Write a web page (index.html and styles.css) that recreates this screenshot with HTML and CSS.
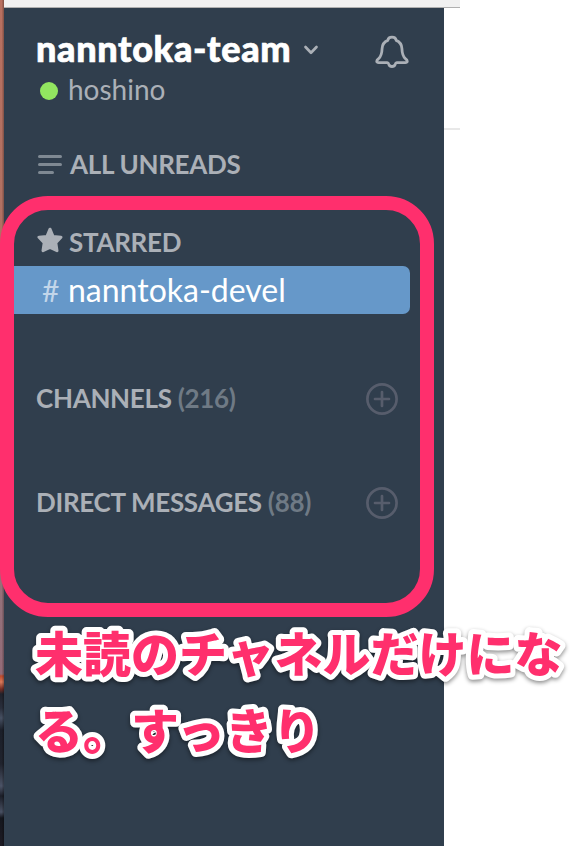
FILE: index.html
```html
<!DOCTYPE html>
<html lang="ja">
<head>
<meta charset="utf-8">
<title>nanntoka-team</title>
<link rel="stylesheet" href="styles.css">
</head>
<body>
<div class="screen">
  <div class="desktop"></div>
  <div class="window">
    <div class="titlebar"></div>
    <div class="panes">
      <aside class="sidebar">
        <header class="team">
          <div class="team-row">
            <span class="team-name">nanntoka-team</span>
            <svg class="chevron" width="16" height="12" viewBox="0 0 16 12"><path d="M2.5 3 L8 8.7 L13.5 3"/></svg>
            <svg class="bell" width="34" height="34" viewBox="0 0 34 34"><path d="M17 2.2 C14.7 2.2 13.1 3.5 12.8 5.4 C9.1 6.9 7.3 9.7 7.1 13.5 C6.9 18.4 6 21.6 3.6 23.6 C1.2 25.4 1 27.6 3.7 27.6 H12.3 C13.3 27.6 13.5 28.2 13.8 29.2 C14.3 30.7 15.4 31.5 17 31.5 C18.6 31.5 19.7 30.7 20.2 29.2 C20.5 28.2 20.7 27.6 21.7 27.6 H30.3 C33 27.6 32.8 25.4 30.4 23.6 C28 21.6 27.1 18.4 26.9 13.5 C26.7 9.7 24.9 6.9 21.2 5.4 C20.9 3.5 19.3 2.2 17 2.2 Z"/></svg>
          </div>
          <div class="user"><i class="presence"></i><span class="user-name">hoshino</span></div>
        </header>
        <div class="heading unreads">
          <svg class="lines" width="26" height="22" viewBox="0 0 26 22"><path d="M2.5 3.5H23.5 M2.5 11.5H23.5 M2.5 19.5H15.5"/></svg>
          <span class="unreads-label">ALL UNREADS</span>
        </div>
        <div class="heading starred">
          <svg class="star" width="26" height="26" viewBox="0 0 26 26"><path d="M13 2.2 L16 9.4 L24 10.2 L18.8 15.6 L20 23.7 L13 20.4 L6 23.7 L7.2 15.6 L2 10.2 L10 9.4 Z"/></svg>
          <span class="starred-label">STARRED</span>
        </div>
        <div class="channel"><span class="hash">#</span><span class="channel-name">nanntoka-devel</span></div>
        <div class="heading channels">
          <span class="channels-label">CHANNELS</span><span class="count">(216)</span>
          <svg class="plus" width="34" height="34" viewBox="0 0 34 34"><circle cx="17" cy="17" r="14.6"/><path d="M17 10V24 M10 17H24"/></svg>
        </div>
        <div class="heading directs">
          <span class="directs-label">DIRECT MESSAGES</span><span class="count">(88)</span>
          <svg class="plus" width="34" height="34" viewBox="0 0 34 34"><circle cx="17" cy="17" r="14.6"/><path d="M17 10V24 M10 17H24"/></svg>
        </div>
      </aside>
      <main class="content"><div class="content-header"></div></main>
    </div>
  </div>
  <div class="marker"></div>
  <svg class="note" width="584" height="170" viewBox="0 0 584 170">
    <text x="35" y="56">未読のチャネルだけにな</text>
    <text x="35" y="133">る。すっきり</text>
  </svg>
</div>
</body>
</html>
```
FILE: styles.css
```css
* { box-sizing: border-box; }
body { margin: 0; background: #fff; font-family: Lato, "Noto Sans CJK JP", sans-serif; }
.screen { position: relative; display: flex; width: 584px; height: 846px; overflow: hidden; }
.desktop {
  width: 4px;
  background:
    linear-gradient(90deg, transparent 40%, rgba(0, 0, 0, .3)),
    linear-gradient(#b87060 0, #b17162 200px, #94707a 610px, #936b78 674px, #bc4a2c 676px, #d9795a 682px, #762d24 689px, #20222c 694px, #292e3b 708px, #465062 718px, #1b1f29 730px, #20232d 764px, #4b5366 786px, #1b1e28 796px, #485062 812px, #14161d 818px, #1d1b24);
}
.window { width: 456px; display: flex; flex-direction: column; }
.titlebar { height: 8px; background: #f1f1f1; border-bottom: 1px solid #b0b0b0; }
.panes { flex: 1; display: flex; }
.sidebar { width: 440px; background: #303e4d; color: #abb0b7; }
.content { flex: 1; }
.content-header { height: 122px; border-bottom: 2px solid #e8e8e8; }
svg { flex: none; fill: none; stroke: #abb0b7; stroke-linecap: round; stroke-linejoin: round; }
span { white-space: nowrap; }

.team { padding: 16px 35px 0 32px; }
.team-row { display: flex; align-items: center; height: 48px; }
.team-name { color: #fff; font-size: 36px; font-weight: 900; line-height: 48px; letter-spacing: .66px; -webkit-text-stroke: .7px #fff; }
.chevron { margin-left: 12px; margin-top: 3px; stroke-width: 2.7; }
.bell { margin-left: auto; margin-top: 7px; stroke-width: 2.8; }
.user { display: flex; align-items: center; height: 36px; margin-top: -1px; padding-left: 4px; }
.presence { width: 18px; height: 18px; margin-top: 4px; border-radius: 50%; background: #92e660; }
.user-name { margin-left: 10px; font-size: 28px; line-height: 36px; }

.heading { display: flex; align-items: center; height: 36px; padding: 0 45px 0 32px; font-size: 26px; font-weight: 700; line-height: 36px; letter-spacing: -.3px; }
.unreads { margin-top: 39px; }
.lines { margin: 0 7px 0 1px; stroke: #7f8993; stroke-width: 3; }
.starred { margin-top: 42px; }
.star { margin: -5px 6px 0 1px; fill: #abb0b7; stroke-width: 3; }
.channel { display: flex; width: 406px; height: 48px; margin-top: 6px; padding-left: 38px; border-radius: 0 7px 7px 0; background: #6698c9; color: #fff; font-size: 32px; line-height: 48px; }
.hash { width: 26px; font-size: 30px; color: #c2d6ea; }
.channels { margin-top: 66px; }
.directs { margin-top: 68px; }
.count { margin-left: 6px; color: #6f7a85; }
.plus { margin: 2px 0 0 auto; stroke: #575d6c; stroke-width: 2.7; }

/* Annotation drawn over the window */
.marker { position: absolute; left: 0; top: 196px; width: 434px; height: 421px; border: 14px solid #ff2f6d; border-radius: 48px; }
.note {
  position: absolute; left: 0; top: 616px;
  font: 900 48px "Noto Sans CJK JP", sans-serif;
  fill: #ff2f6d; stroke: #fff; stroke-width: 10px; paint-order: stroke fill;
  filter: drop-shadow(0 2px 2px rgba(0, 0, 0, .45));
}
```
